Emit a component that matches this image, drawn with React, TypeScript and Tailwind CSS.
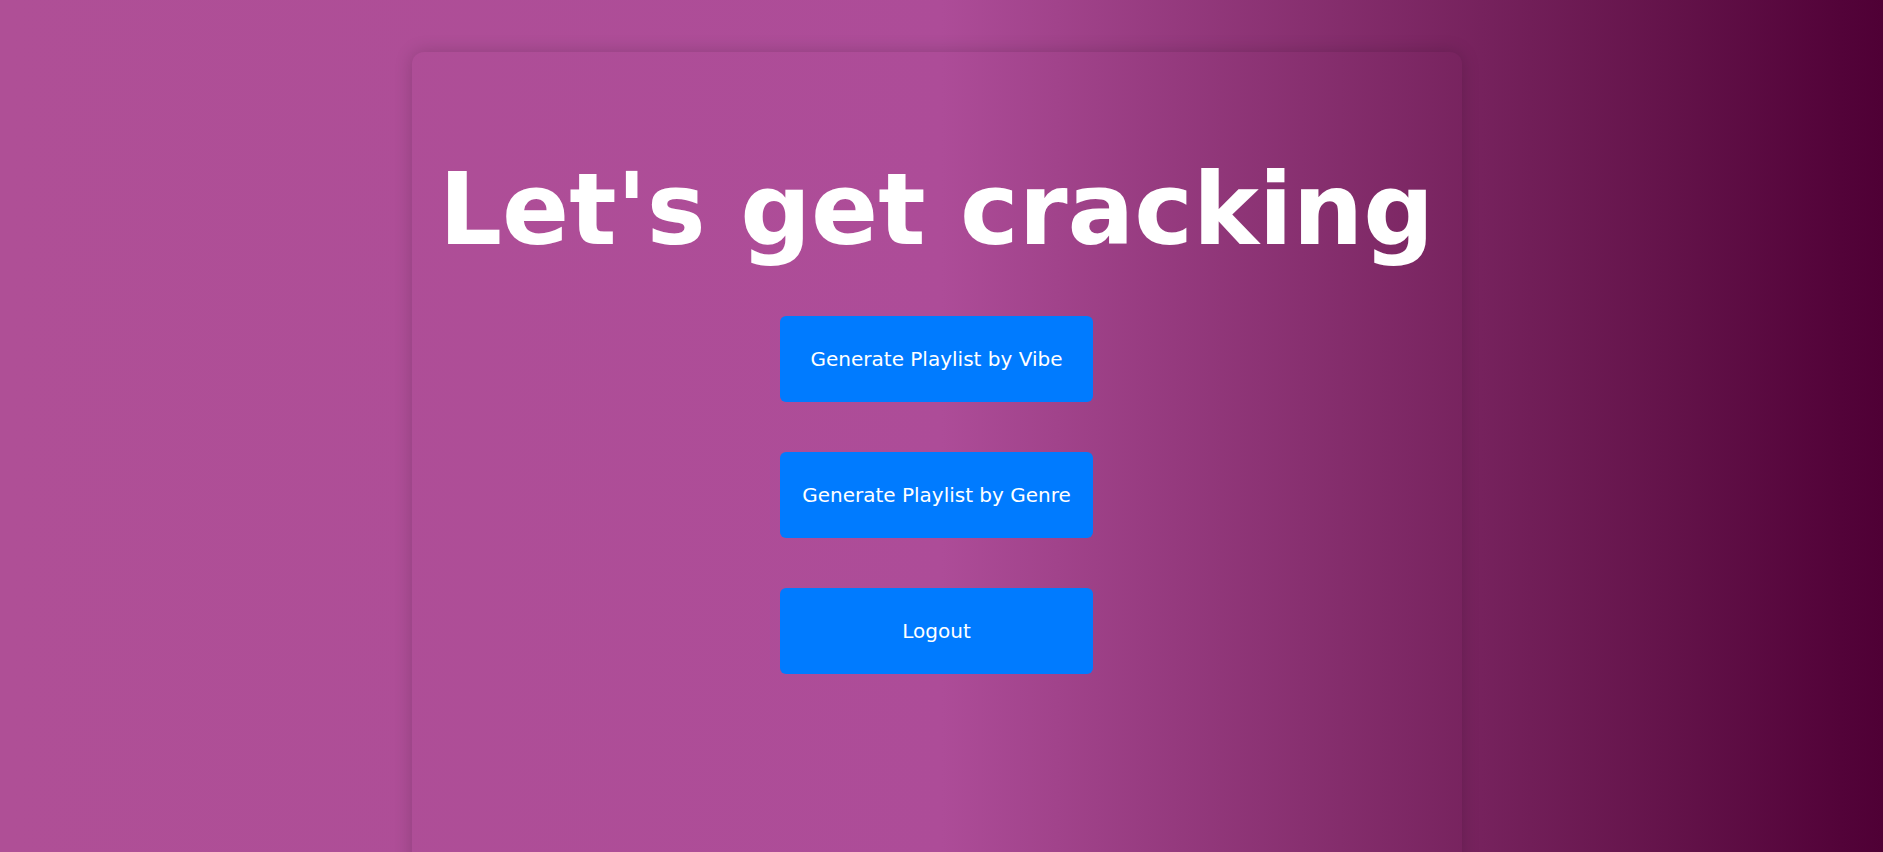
import React from 'react';

const buttons = ['Generate Playlist by Vibe', 'Generate Playlist by Genre', 'Logout'];

export default function App() {
  return (
    <div
      className="min-h-[852px] h-[852px] overflow-hidden w-full bg-gradient-to-r from-[#af4f96] via-[#ad4c98] via-50% to-[#4f0035] flex justify-center pt-[52px] pr-[10px]"
      style={{ fontFamily: '"DejaVu Sans", Verdana, sans-serif' }}
    >
      <div className="w-[1050px] h-[1000px] shrink-0 rounded-xl shadow-[0_0_18px_rgba(0,0,0,0.18)] flex flex-col items-center">
        <h1 className="mt-[101px] text-[99px] leading-[114px] font-bold text-white whitespace-nowrap">
          Let's get cracking
        </h1>
        <div className="mt-[49px] flex flex-col items-center gap-[50px]">
          {buttons.map((label) => (
            <button
              key={label}
              className="w-[313px] h-[86px] rounded-md bg-[#007bff] text-white text-[20px]"
            >
              {label}
            </button>
          ))}
        </div>
      </div>
    </div>
  );
}
